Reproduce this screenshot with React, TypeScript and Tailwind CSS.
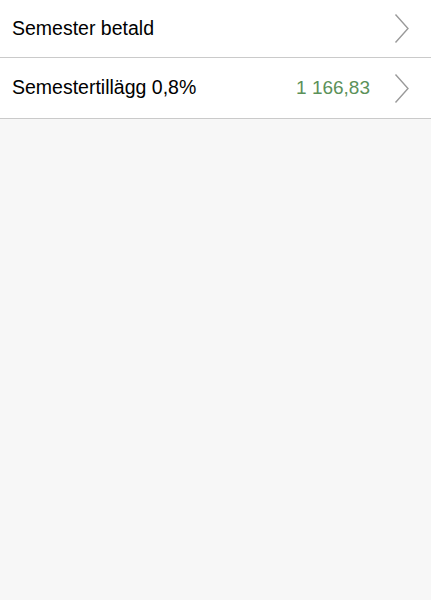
import React from "react";

function Chevron() {
  return (
    <svg width="16" height="31" viewBox="0 0 16 31" className="shrink-0">
      <polyline points="1.5,1.5 14,15.5 1.5,29.5" fill="none" stroke="#9a9a9a" strokeWidth="1.4" />
    </svg>
  );
}

export default function App() {
  return (
    <div className="min-h-[600px] w-full bg-[#f7f7f7] font-['Liberation_Sans',Arial,sans-serif]">
      <div className="flex h-[58px] items-center border-b border-[#cacaca] bg-white pl-3 pr-[21px]">
        <span className="flex-1 text-[19.5px] text-black">Semester betald</span>
        <Chevron />
      </div>
      <div className="flex h-[61px] items-center border-b border-[#cacaca] bg-white pl-3 pr-[21px]">
        <span className="flex-1 text-[19.5px] text-black">Semestertillägg 0,8%</span>
        <span className="mr-6 text-[19px] text-[#5b9159]">1 166,83</span>
        <Chevron />
      </div>
    </div>
  );
}
